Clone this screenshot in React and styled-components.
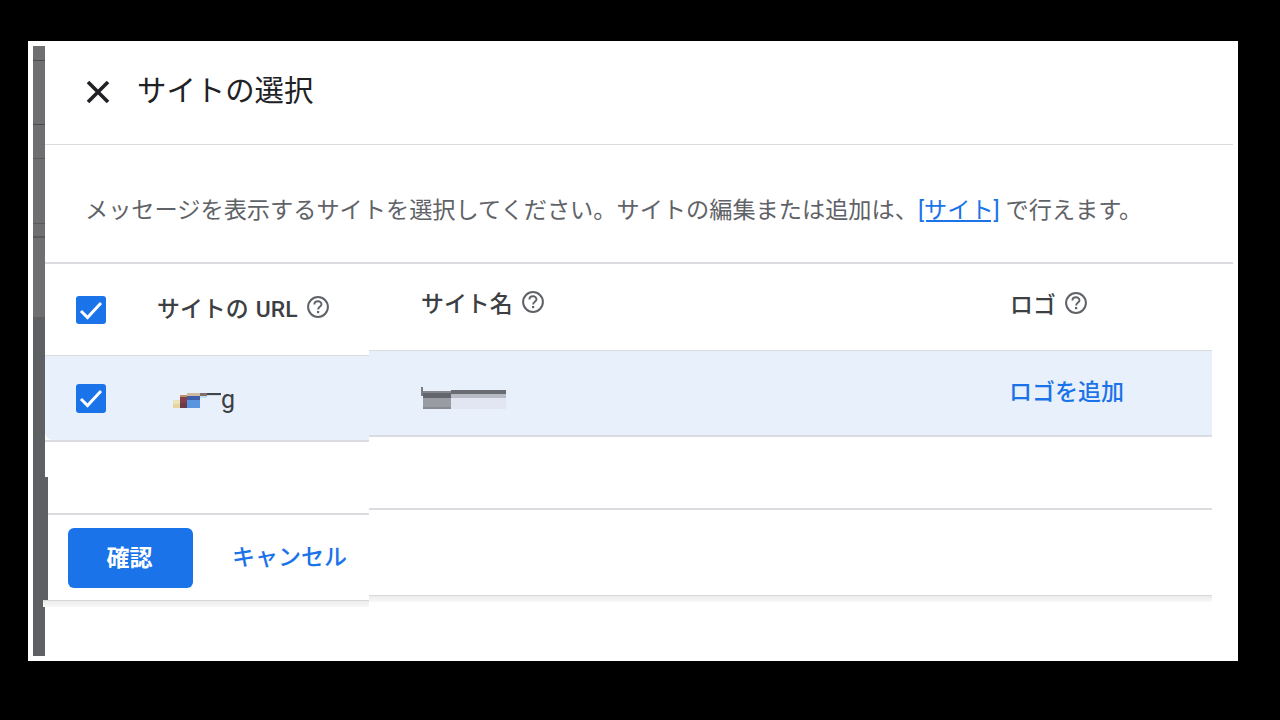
import React from 'react';
import styled, { createGlobalStyle } from 'styled-components';

const GlobalStyle = createGlobalStyle`
  html, body {
    margin: 0;
    padding: 0;
    background: #000;
  }
  * {
    box-sizing: border-box;
  }
`;

const font = `Roboto, "Noto Sans CJK JP", "Noto Sans", sans-serif`;
const blue = '#1a73e8';
const line = '#dadce0';

const Page = styled.div`
  width: 1280px;
  height: 720px;
  padding: 41px 0 0 28px;
  background: #000;
  font-family: ${font};
  overflow: hidden;
`;

const Frame = styled.div`
  width: 1210px;
  height: 620px;
  padding: 5px;
  display: flex;
  background: #fff;
`;

const Strip = styled.div`
  flex: 0 0 12px;
  background:
    linear-gradient(#4a4a4d, #4a4a4d) 0 14px / 100% 1px no-repeat,
    linear-gradient(#4a4a4d, #4a4a4d) 0 78px / 100% 1px no-repeat,
    linear-gradient(#5a5a5d, #5a5a5d) 0 112px / 100% 1px no-repeat,
    linear-gradient(#5a5a5d, #5a5a5d) 0 177px / 100% 1px no-repeat,
    linear-gradient(#5a5a5d, #5a5a5d) 0 190px / 100% 2px no-repeat,
    linear-gradient(to bottom, #6f6f72 0, #6f6f72 271px, #5f6064 271px, #5f6064 100%);
`;

const Main = styled.div`
  flex: 1;
  display: flex;
  flex-direction: column;
`;

const Header = styled.header`
  height: 99px;
  display: flex;
  align-items: center;
  gap: 27px;
  padding: 0 0 9px 41px;
  border-bottom: 1px solid #dcdcdc;
`;

const CloseButton = styled.button`
  width: 24px;
  height: 24px;
  padding: 0;
  border: 0;
  background: none;
  display: flex;
  color: #202124;
  margin-top: 3px;
`;

const Title = styled.h1`
  margin: 0;
  font-size: 29.4px;
  line-height: 40px;
  font-weight: 400;
  color: #202124;
`;

const Notice = styled.p`
  height: 119px;
  margin: 0;
  padding: 48px 0 0 40px;
  font-size: 23.2px;
  line-height: 34px;
  color: #5f6368;
  white-space: nowrap;
  border-bottom: 2px solid ${line};

  a {
    color: ${blue};
    text-decoration: underline;
  }
`;

const Table = styled.div`
  display: flex;
  align-items: flex-start;
`;

const LeftColumn = styled.div`
  flex: 0 0 324px;
  position: relative;
`;

const RightColumn = styled.div`
  flex: 0 0 843px;
`;

const HeadRow = styled.div`
  height: ${p => p.$h}px;
  display: flex;
  align-items: center;
  border-bottom: 1px solid ${line};
`;

const RowEdge = styled.div`
  border-bottom: 2px solid ${line};
`;

const BodyRow = styled.div`
  height: 84px;
  display: flex;
  align-items: center;
  background: #e8f0fb;
  border-bottom-left-radius: ${p => (p.$rounded ? '8px' : '0')};
`;

const Checkbox = styled.span`
  flex: none;
  width: 30px;
  height: ${p => p.$h}px;
  margin-left: 31px;
  border-radius: 3px;
  background: ${blue};
  display: flex;
  align-items: center;
  justify-content: center;
`;

const HeadLabel = styled.span`
  display: flex;
  align-items: center;
  gap: 9px;
  margin-left: ${p => p.$left}px;
  margin-bottom: ${p => p.$up || 0}px;
  font-size: 22.9px;
  font-weight: 500;
  word-spacing: 1.5px;
  color: #3c4043;
  white-space: nowrap;
`;

const HeadCell = styled.div`
  flex: 0 0 ${p => p.$w}px;
  display: flex;
`;

const UrlCell = styled.span`
  display: flex;
  align-items: flex-start;
  margin-left: 67px;
  height: 30px;
  padding-top: 2px;
  font-size: 25px;
  line-height: 30px;
  color: #3c4043;
`;

const UrlMark = styled.svg`
  margin-top: 4px;
`;

const NameCell = styled.div`
  flex: 0 0 640px;
  display: flex;
  padding: 10px 0 0 52px;
`;

const AddLogo = styled.a`
  margin-bottom: 6px;
  font-size: 23px;
  font-weight: 500;
  color: ${blue};
  white-space: nowrap;
`;

const Gap = styled.div`
  height: ${p => p.$h}px;
  border-bottom: ${p => (p.$line ? `2px solid ${line}` : '0')};
`;

const DarkEdge = styled.div`
  border-left: 3px solid #5f6064;
`;

const Footer = styled.div`
  height: 85px;
  display: flex;
  align-items: center;
  gap: 39px;
  padding: 0 0 0 20px;
`;

const Primary = styled.button`
  width: 125px;
  height: 60px;
  padding: 0 2px 4px 0;
  border: 0;
  border-radius: 6px;
  background: ${blue};
  color: #fff;
  font-family: ${font};
  font-size: 23px;
  font-weight: 700;
`;

const Secondary = styled.a`
  margin-bottom: 6px;
  font-size: 23px;
  font-weight: 500;
  color: ${blue};
  white-space: nowrap;
`;

const Shadow = styled.div`
  height: 7px;
  margin-left: ${p => p.$left || 0}px;
  border-top: 1px solid #d8d8d8;
  background: linear-gradient(#ececec, #f8f8f8);
`;

const Help = () => (
  <svg width="22" height="22" viewBox="0 0 22 22" fill="none">
    <circle cx="11" cy="11" r="9.9" stroke="#5f6368" strokeWidth="2" />
    <path
      d="M7.4 8.6c0-2 1.6-3.3 3.6-3.3s3.5 1.3 3.5 3c0 2.5-3.4 2.6-3.4 5.2"
      stroke="#5f6368"
      strokeWidth="1.9"
    />
    <rect x="10" y="15" width="2.2" height="2.2" fill="#5f6368" />
  </svg>
);

const Check = () => (
  <svg width="24" height="20" viewBox="0 0 24 20" fill="none">
    <path d="M2 11l6.5 6.5L22 3" stroke="#fff" strokeWidth="3" />
  </svg>
);

// blurred out site url in the row
const UrlSmudge = () => (
  <UrlMark width="48" height="19" viewBox="0 0 48 19" shapeRendering="crispEdges">
    <rect x="0" y="11" width="7" height="4" fill="#e8e4b8" />
    <rect x="0" y="15" width="7" height="4" fill="#e6d4a0" />
    <rect x="7" y="6" width="7" height="2" fill="#c09060" />
    <rect x="7" y="8" width="7" height="6" fill="#84404a" />
    <rect x="7" y="14" width="7" height="5" fill="#6a3c48" />
    <rect x="14" y="4" width="13" height="3" fill="#cdb8a0" />
    <rect x="14" y="7" width="13" height="4" fill="#3d5ea8" />
    <rect x="14" y="11" width="13" height="8" fill="#5a96e0" />
    <rect x="27" y="4" width="7" height="3" fill="#80706c" />
    <rect x="27" y="7" width="7" height="2" fill="#c0e0f8" />
    <rect x="34" y="4" width="14" height="2" fill="#3e4650" />
    <rect x="34" y="6" width="14" height="1" fill="#d8d8e0" />
  </UrlMark>
);

// blurred out site name in the row
const NameSmudge = () => (
  <svg width="86" height="22" viewBox="0 0 86 22" shapeRendering="crispEdges">
    <rect x="0" y="0" width="2" height="9" fill="#7a7c84" />
    <rect x="2" y="4" width="28" height="2" fill="#84868c" />
    <rect x="2" y="6" width="28" height="5" fill="#63666c" />
    <rect x="2" y="11" width="28" height="9" fill="#9a9ca4" />
    <rect x="2" y="20" width="28" height="2" fill="#888a92" />
    <rect x="30" y="3" width="55" height="4" fill="#6a6c74" />
    <rect x="30" y="7" width="55" height="4" fill="#b8bac4" />
    <rect x="30" y="11" width="55" height="11" fill="#e2e6f2" />
  </svg>
);

export default function App() {
  return (
    <Page>
      <GlobalStyle />
      <Frame>
        <Strip />
        <Main>
          <Header>
            <CloseButton>
              <svg width="24" height="24" viewBox="0 0 24 24" fill="none">
                <path d="M2 2l20 20M22 2L2 22" stroke="currentColor" strokeWidth="3.6" />
              </svg>
            </CloseButton>
            <Title>サイトの選択</Title>
          </Header>
          <Notice>
            メッセージを表示するサイトを選択してください。サイトの編集または追加は、<a href="#site">[サイト]</a> で行えます。
          </Notice>
          <Table>
            <LeftColumn>
              <HeadRow $h={92}>
                <Checkbox $h={28}><Check /></Checkbox>
                <HeadLabel $left={51} $up={5}>サイトの URL <Help /></HeadLabel>
              </HeadRow>
              <RowEdge>
                <BodyRow $rounded>
                  <Checkbox $h={29}><Check /></Checkbox>
                  <UrlCell><UrlSmudge />g</UrlCell>
                </BodyRow>
              </RowEdge>
              <Gap $h={35} />
              <DarkEdge>
                <Gap $h={38} $line />
                <Footer>
                  <Primary>確認</Primary>
                  <Secondary>キャンセル</Secondary>
                </Footer>
              </DarkEdge>
              <Shadow $left={-2} />
            </LeftColumn>
            <RightColumn>
              <HeadRow $h={87}>
                <HeadCell $w={589}>
                  <HeadLabel $left={52} $up={11}>サイト名 <Help /></HeadLabel>
                </HeadCell>
                <HeadLabel $left={52} $up={9}>ロゴ <Help /></HeadLabel>
              </HeadRow>
              <RowEdge>
                <BodyRow>
                  <NameCell><NameSmudge /></NameCell>
                  <AddLogo>ロゴを追加</AddLogo>
                </BodyRow>
              </RowEdge>
              <Gap $h={73} $line />
              <Gap $h={85} />
              <Shadow />
            </RightColumn>
          </Table>
        </Main>
      </Frame>
    </Page>
  );
}
